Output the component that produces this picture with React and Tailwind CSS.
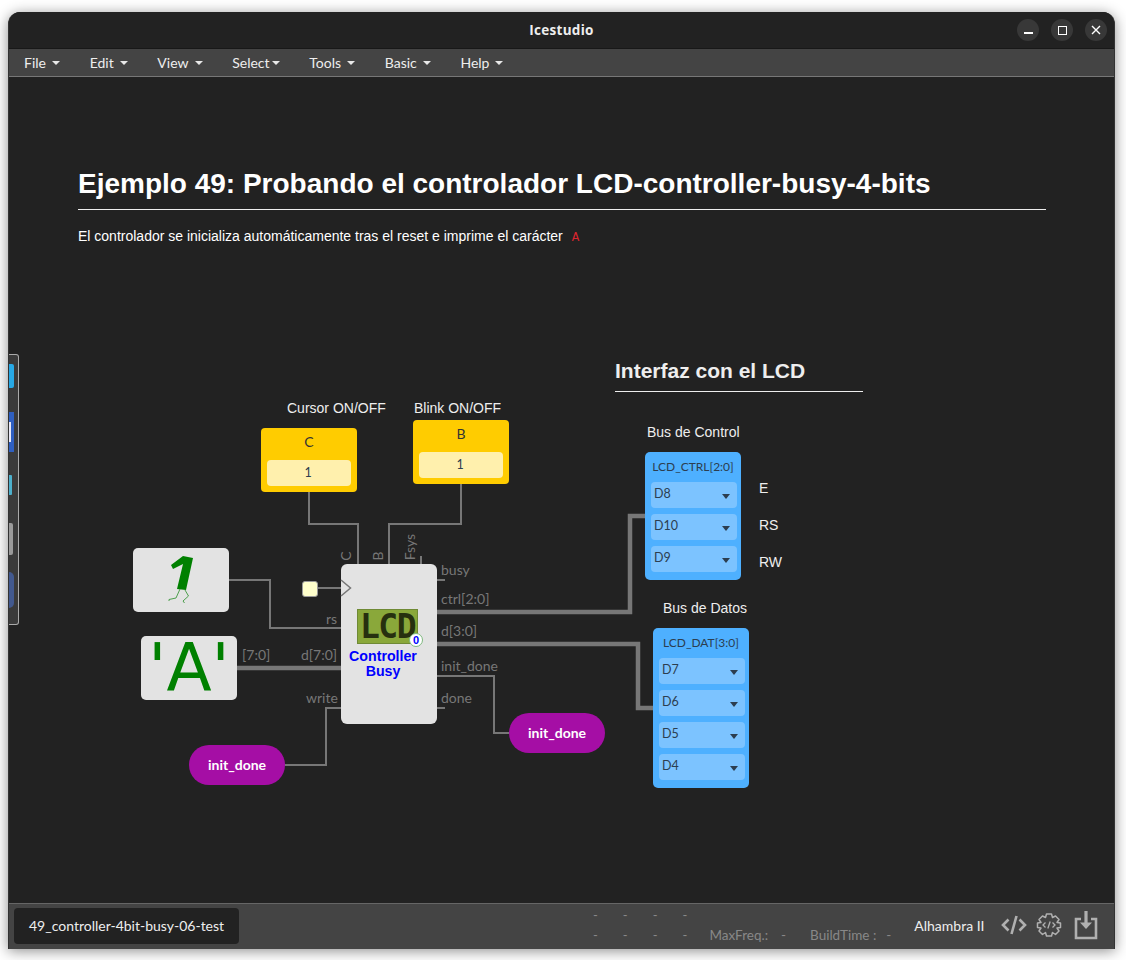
import React from "react";

const menus = ["File", "Edit", "View", "Select", "Tools", "Basic", "Help"];

const WinButton = ({ children }) => (
  <div className="flex h-[22px] w-[22px] items-center justify-center rounded-full bg-[#383838]">{children}</div>
);

// caja desplegable de un pin
const PinSelect = ({ label }) => (
  <div className="flex h-[26px] items-center justify-between rounded-[4px] bg-[#7cc3ff] pl-[3px] pr-[7px] text-[12.5px] text-[#2c3e50]">
    <span className="-mt-[1px]">{label}</span>
    <span className="mt-[2px] h-0 w-0 border-x-[4px] border-t-[5px] border-x-transparent border-t-[#2c3e50]" />
  </div>
);

const PinBlock = ({ title, pins, className }) => (
  <div className={`absolute flex w-[96px] flex-col gap-[6px] rounded-[5px] bg-[#4eb0ff] pl-[6px] pr-[4px] pt-[6px] font-['Lato',sans-serif] ${className}`}>
    <div className="h-[18px] whitespace-nowrap pr-[2px] text-center text-[12px] leading-[18px] text-[#2c3e50]">{title}</div>
    {pins.map((p) => (
      <PinSelect key={p} label={p} />
    ))}
  </div>
);

const InputBlock = ({ name, className }) => (
  <div className={`absolute flex h-[64px] w-[96px] flex-col items-center rounded-[4px] bg-[#ffcc00] px-[6px] font-['Lato',sans-serif] ${className}`}>
    <div className="mt-[4px] h-[20px] text-[14px] leading-[20px] text-[#333]">{name}</div>
    <div className="mt-[8px] h-[26px] w-full rounded-[4px] bg-[#fff0ad] pr-[2px] text-center text-[12.5px] leading-[26px] text-[#2c3e50]">1</div>
  </div>
);

const Pill = ({ className }) => (
  <div className={`absolute flex h-[40px] w-[96px] items-center justify-center rounded-[20px] bg-[#a50ea5] pb-[2px] font-['Lato',sans-serif] text-[14px] font-bold text-white ${className}`}>
    init_done
  </div>
);

const PortLabel = ({ className, children }) => (
  <span className={`absolute h-5 whitespace-nowrap font-['Lato',sans-serif] text-[14px] leading-5 text-[#777] ${className}`}>{children}</span>
);

const NoteLabel = ({ className, children }) => (
  <span className={`absolute h-5 whitespace-nowrap font-['Liberation_Sans',sans-serif] text-[14px] leading-5 text-[#eee] ${className}`}>{children}</span>
);

const Wires = () => (
  <svg className="absolute left-0 top-0" width="1126" height="960" fill="none" stroke="#777">
    <g strokeWidth="2">
      <path d="M309 492V524H358V564" />
      <path d="M461 484V524H389V564" />
      <path d="M421 556V566" />
      <path d="M437 580H445" />
      <path d="M437 708H445" />
      <path d="M437 676H494V733H509" />
      <path d="M229 580H270V628H341" />
      <path d="M318 588H341" />
      <path d="M341 708H326V765H285" />
    </g>
    <g strokeWidth="4.5">
      <path d="M437 612H630V516H645" />
      <path d="M437 644H638V708H653" />
      <path d="M237 668H341" />
    </g>
  </svg>
);

const Diagram = () => (
  <div className="absolute -left-[9px] -top-[77px] h-[960px] w-[1126px]">
    <Wires />

    <NoteLabel className="left-[287px] top-[398px]">Cursor ON/OFF</NoteLabel>
    <NoteLabel className="left-[414px] top-[398px]">Blink ON/OFF</NoteLabel>
    <InputBlock name="C" className="left-[261px] top-[428px]" />
    <InputBlock name="B" className="left-[413px] top-[420px]" />

    {/* bloque del bit 1 */}
    <div className="absolute left-[133px] top-[548px] h-[64px] w-[96px] rounded-[5px] bg-[#e3e3e3]">
      <svg viewBox="133 548 96 64" className="h-full w-full" fill="none">
        <path d="M171 565L183 556L193 558L186 590L177 589L183 564L173 569Z" fill="#008000" />
        <path d="M180 589L176 598L169 599.5M169 599.5V601M185 590L188.5 596L183 601L184.5 603" stroke="#4d9f4d" strokeWidth="1" />
      </svg>
    </div>

    {/* constante 'A' */}
    <div className="absolute left-[141px] top-[636px] flex h-[64px] w-[96px] items-center justify-center rounded-[5px] bg-[#e3e3e3] font-['DejaVu_Sans',sans-serif] text-[66px] leading-none text-[#008000]">
      'A'
    </div>

    <div className="absolute left-[302px] top-[581px] h-[16px] w-[16px] rounded-[3px] border border-[#999] bg-[#ffffcc]" />

    {/* bloque principal */}
    <div className="absolute left-[341px] top-[564px] flex h-[160px] w-[96px] flex-col items-start rounded-[6px] bg-[#e3e3e3] font-['Liberation_Sans',sans-serif]">
      <div className="relative ml-[16px] mt-[45px] flex h-[35px] w-[61px] items-center justify-center border border-[#6f8a35] bg-[#8aa83a] font-['DejaVu_Sans_Mono',monospace] text-[33px] font-bold leading-none tracking-[-1.5px] text-[#27300f]">
        LCD
        <span className="absolute -bottom-[4px] -right-[6px] flex h-[14px] w-[14px] items-center justify-center rounded-full border border-[#7fb97f] bg-white font-['Liberation_Sans',sans-serif] text-[11px] font-bold tracking-normal text-[#0000ff]">0</span>
      </div>
      <div className="ml-[7px] mt-[5px] w-[70px] text-center text-[14.2px] font-bold leading-[15px] text-[#0000ff]">
        Controller
        <br />
        Busy
      </div>
    </div>
    <svg className="absolute left-[340px] top-[578px]" width="13" height="20" fill="#e3e3e3" stroke="#777" strokeWidth="1.5">
      <path d="M1 2L10.5 10L1 18" />
    </svg>

    <PortLabel className="left-[341px] top-[546px] origin-center -rotate-90">C</PortLabel>
    <PortLabel className="left-[373px] top-[546px] origin-center -rotate-90">B</PortLabel>
    <PortLabel className="left-[397px] top-[537px] origin-center -rotate-90">Fsys</PortLabel>
    <PortLabel className="left-[441px] top-[560px]">busy</PortLabel>
    <PortLabel className="left-[441px] top-[589px]">ctrl[2:0]</PortLabel>
    <PortLabel className="left-[441px] top-[621px]">d[3:0]</PortLabel>
    <PortLabel className="left-[441px] top-[656px]">init_done</PortLabel>
    <PortLabel className="left-[441px] top-[688px]">done</PortLabel>
    <PortLabel className="left-[326px] top-[609px]">rs</PortLabel>
    <PortLabel className="left-[242px] top-[645px]">[7:0]</PortLabel>
    <PortLabel className="left-[301px] top-[645px]">d[7:0]</PortLabel>
    <PortLabel className="left-[306px] top-[688px]">write</PortLabel>

    <Pill className="left-[509px] top-[713px]" />
    <Pill className="left-[189px] top-[745px]" />

    {/* nota de la interfaz */}
    <div className="absolute left-[615px] top-[358px] h-[34px] w-[248px] border-b border-[#eee] font-['Liberation_Sans',sans-serif] text-[21px] font-bold leading-[26px] text-[#eee]">
      Interfaz con el LCD
    </div>
    <NoteLabel className="left-[647px] top-[422px]">Bus de Control</NoteLabel>
    <NoteLabel className="left-[663px] top-[598px]">Bus de Datos</NoteLabel>
    <NoteLabel className="left-[759px] top-[478px]">E</NoteLabel>
    <NoteLabel className="left-[759px] top-[515px]">RS</NoteLabel>
    <NoteLabel className="left-[759px] top-[552px]">RW</NoteLabel>

    <PinBlock title="LCD_CTRL[2:0]" pins={["D8", "D10", "D9"]} className="left-[645px] top-[452px] h-[128px]" />
    <PinBlock title="LCD_DAT[3:0]" pins={["D7", "D6", "D5", "D4"]} className="left-[653px] top-[628px] h-[160px]" />
  </div>
);

const StatusIcons = () => (
  <div className="-mt-[3px] flex items-center text-[#b0b0b0]">
    <svg width="26" height="24" viewBox="0 0 26 24" fill="none" stroke="currentColor" strokeWidth="2.6" className="ml-[16px]">
      <path d="M7.5 6.5L2 12L7.5 17.5M18.5 6.5L24 12L18.5 17.5M15.5 3L10.5 21" />
    </svg>
    <svg width="26" height="26" viewBox="0 0 26 26" fill="none" stroke="currentColor" strokeWidth="1.5" className="ml-[9px]">
      <path d="M10.5 2H15.5L16.5 5.5L19.5 4L23 7.5L21 10.5L24.5 11V15.5L21 16L23 19L19.5 22.5L16.5 20.5L15.5 24H10.5L9.5 20.5L6.5 22.5L3 19L5 16L1.5 15.5V11L5 10.5L3 7.5L6.5 4L9.5 5.5Z" strokeLinejoin="round" />
      <path d="M9.5 10.5L7 13L9.5 15.5M16.5 10.5L19 13L16.5 15.5M14.2 9.5L11.8 16.5" strokeWidth="1.3" />
    </svg>
    <svg width="24" height="30" viewBox="0 0 24 30" fill="none" stroke="currentColor" className="ml-[12px]">
      <path d="M7 9H2V28H22V9H17" strokeWidth="2.6" />
      <path d="M12 1V17" strokeWidth="3.2" />
      <path d="M6 12.5H18L12 19Z" fill="currentColor" stroke="none" />
    </svg>
  </div>
);

export default function App() {
  return (
    <div className="h-[960px] w-[1126px] overflow-hidden bg-white pl-[8px] pt-[12px]">
      <div className="flex h-[937px] w-[1107px] flex-col overflow-hidden rounded-t-[12px] border-x border-[#333] bg-[#222] shadow-[0_2px_14px_rgba(0,0,0,0.45)]">
        {/* barra de titulo */}
        <div className="relative flex h-[37px] shrink-0 items-center justify-center border-b border-[#181818] bg-[#222]">
          <span className="font-['Open_Sans',sans-serif] text-[13.5px] font-bold tracking-[0.3px] text-[#eee]">Icestudio</span>
          <div className="absolute right-[7px] top-[7px] flex gap-[12px]">
            <WinButton>
              <span className="mt-[6px] h-[1.5px] w-[9px] bg-white" />
            </WinButton>
            <WinButton>
              <span className="h-[9px] w-[9px] border border-white" />
            </WinButton>
            <WinButton>
              <svg width="10" height="10" viewBox="0 0 10 10" stroke="white" strokeWidth="1.4">
                <path d="M1 1L9 9M9 1L1 9" />
              </svg>
            </WinButton>
          </div>
        </div>

        {/* menu */}
        <div className="flex h-[28px] shrink-0 items-center gap-[29.7px] border-b border-[#777] bg-[#444] pl-[15px] font-['Lato',sans-serif] text-[14px] text-[#eee]">
          {menus.map((m) => (
            <div key={m} className="flex items-center">
              {m}
              <span
                className={
                  m === "Select"
                    ? "ml-[2px] inline-block h-0 w-0 border-x-[4px] border-t-[4px] border-x-transparent border-t-[#e8e8e8]"
                    : "ml-[6px] inline-block h-0 w-0 border-x-[4px] border-t-[4px] border-x-transparent border-t-[#e8e8e8]"
                }
              />
            </div>
          ))}
        </div>

        {/* area de trabajo */}
        <div className="relative flex-1 overflow-hidden bg-[#222]">
          <div className="relative ml-[69px] w-[968px] pt-[90px] font-['Liberation_Sans',sans-serif]">
            <h1 className="border-b border-[#eee] pb-[9px] text-[28px] font-bold leading-[33px] text-[#fff]">
              Ejemplo 49: Probando el controlador LCD-controller-busy-4-bits
            </h1>
            <p className="mt-[18px] text-[14px] leading-[17px] text-[#fff]">
              El controlador se inicializa automáticamente tras el reset e imprime el carácter
              <code className="ml-[9px] font-['Liberation_Mono',monospace] text-[12.5px] text-[#d9252f]">A</code>
            </p>
          </div>
          <Diagram />

          {/* dock lateral */}
          <div className="absolute left-0 top-[277px] flex h-[271px] w-[10px] flex-col rounded-r-[3px] border-y border-r border-[#aaa] bg-[#3a3a3a]">
            <div className="mt-[9px] h-[24px] w-[5px] rounded-r-[2px] bg-[#27a9e6]" />
            <div className="mt-[24px] flex h-[40px] w-[5px] items-center bg-[#2f5fc0]">
              <div className="h-[20px] w-[2px] bg-[#e8e8f5]" />
            </div>
            <div className="mt-[23px] h-[20px] w-[3px] rounded-r-[1px] bg-[#4db0cc]" />
            <div className="mt-[28px] h-[32px] w-[4px] rounded-r-[2px] bg-[#9a9a9a]" />
            <div className="mt-[17px] h-[36px] w-[5px] rounded-r-[5px] bg-[#42598f]" />
          </div>
        </div>

        {/* barra de estado */}
        <div className="flex h-[46px] shrink-0 items-center border-t border-[#666] bg-[#444] pb-[1px] pl-[5px] font-['Lato',sans-serif] text-[14px]">
          <div className="flex h-[36px] w-[225px] items-center rounded-[4px] bg-[#222] pb-[2px] pl-[15px] text-[#eee]">
            49_controller-4bit-busy-06-test
          </div>
          <div className="-mt-[3px] ml-[354px] flex h-[40px] flex-col justify-between text-[13px] leading-[20px] text-[#888]">
            <div className="flex gap-[25px]">
              <span>-</span>
              <span>-</span>
              <span>-</span>
              <span>-</span>
            </div>
            <div className="flex gap-[25px]">
              <span>-</span>
              <span>-</span>
              <span>-</span>
              <span>-</span>
            </div>
          </div>
          <div className="ml-[22px] mt-[17px] flex whitespace-nowrap text-[13.5px] leading-[20px] text-[#888]">
            <span>MaxFreq.:</span>
            <span className="ml-[13px]">-</span>
            <span className="ml-[24px]">BuildTime :</span>
            <span className="ml-[10px]">-</span>
          </div>
          <span className="-mt-[2px] ml-[23px] text-[#eee]">Alhambra II</span>
          <StatusIcons />
        </div>
      </div>
    </div>
  );
}
